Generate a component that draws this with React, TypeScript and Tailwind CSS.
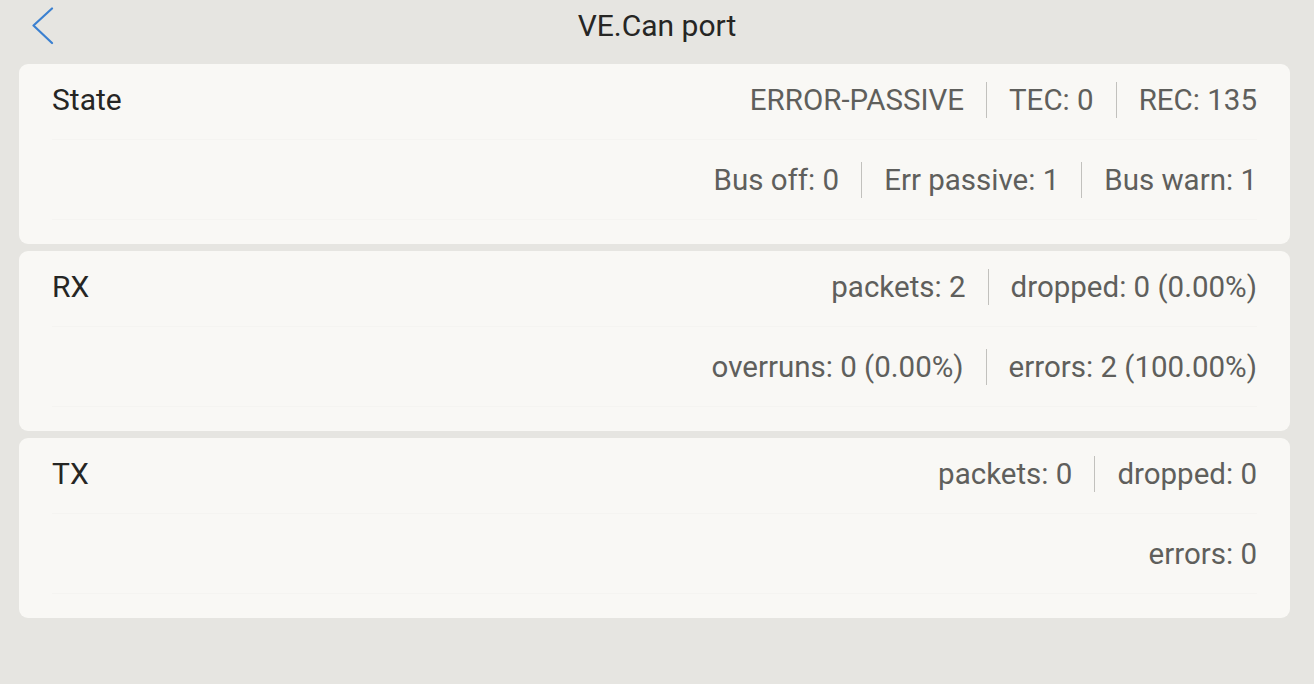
import React from "react";

type Card = { label: string; rows: string[][] };

const cards: Card[] = [
  {
    label: "State",
    rows: [
      ["ERROR-PASSIVE", "TEC: 0", "REC: 135"],
      ["Bus off: 0", "Err passive: 1", "Bus warn: 1"],
    ],
  },
  {
    label: "RX",
    rows: [
      ["packets: 2", "dropped: 0 (0.00%)"],
      ["overruns: 0 (0.00%)", "errors: 2 (100.00%)"],
    ],
  },
  {
    label: "TX",
    rows: [["packets: 0", "dropped: 0"], ["errors: 0"]],
  },
];

function ValueRow({ items }: { items: string[] }) {
  return (
    <div className="flex items-center justify-end">
      {items.map((t, i) => (
        <React.Fragment key={i}>
          {i > 0 && <div className="mx-[22px] h-[36px] w-px bg-[#c2c1bd]" />}
          <span className="whitespace-nowrap text-[29.5px] leading-[36px] text-[#5f5f5c]">{t}</span>
        </React.Fragment>
      ))}
    </div>
  );
}

export default function App() {
  return (
    <div className="h-[684px] w-full overflow-hidden bg-[#e6e5e1] font-['Roboto',sans-serif]">
      <header className="relative flex h-[52px] items-center justify-center">
        <svg
          className="absolute left-[31px] top-[7px]"
          width="24"
          height="38"
          viewBox="0 0 24 38"
          fill="none"
        >
          <path d="M21 1.5 L2.5 18.5 L21 36" stroke="#3b80d0" strokeWidth="2.2" strokeLinecap="round" strokeLinejoin="round" />
        </svg>
        <h1 className="text-[30px] leading-none text-[#262624]">VE.Can port</h1>
      </header>
      <div className="flex w-full flex-col gap-[7px] pl-[19px] pr-[24px] pt-[12px]">
        {cards.map((c) => (
          <div key={c.label} className="h-[180px] rounded-[9px] bg-[#f9f8f5] px-[33px]">
            <div className="flex h-[76px] items-center justify-between border-b border-[#f5f4f1] pb-[4px]">
              <span className="text-[30px] leading-[36px] text-[#262624]">{c.label}</span>
              <ValueRow items={c.rows[0]} />
            </div>
            <div className="flex h-[80px] items-center justify-end border-b border-[#f5f4f1]">
              <ValueRow items={c.rows[1]} />
            </div>
          </div>
        ))}
      </div>
    </div>
  );
}
